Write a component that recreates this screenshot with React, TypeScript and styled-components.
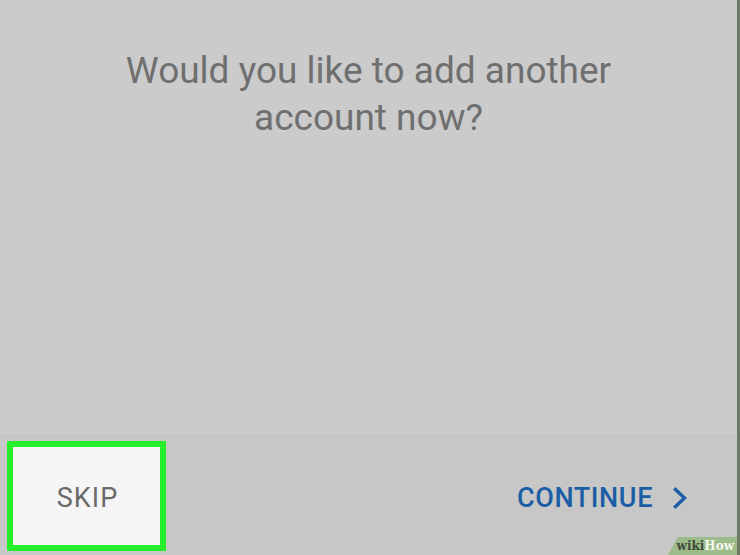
import React from "react";
import styled, { createGlobalStyle } from "styled-components";

const Global = createGlobalStyle`
  html, body { margin: 0; padding: 0; background: #cbcbcb; }
  body { font-family: Roboto, "Noto Sans", "Liberation Sans", sans-serif; }
`;

const Screen = styled.div`
  position: relative;
  width: 740px;
  height: 555px;
  display: flex;
  flex-direction: column;
  background: #cbcbcb;
  overflow: hidden;
  box-sizing: border-box;
  border-right: 3px solid #6c7a64;
`;

const Prompt = styled.section`
  height: 436px;
  box-sizing: border-box;
  padding-top: 47px;
  display: flex;
  justify-content: center;
  border-bottom: 1px solid #c3c3c3;
`;

const Question = styled.h1`
  margin: 0;
  width: 540px;
  text-align: center;
  font-family: Roboto, "Noto Sans", sans-serif;
  font-weight: 400;
  font-size: 37px;
  line-height: 47px;
  color: #6f6f70;
`;

const ActionBar = styled.footer`
  flex: 1;
  display: flex;
  align-items: center;
  justify-content: space-between;
  background: #c7c7c7;
  padding: 4px 49px 3px 7px;
`;

const SkipButton = styled.button`
  width: 159px;
  height: 110px;
  box-sizing: border-box;
  border: 6px solid #27ee2a;
  background: #f5f5f5;
  display: flex;
  align-items: center;
  justify-content: center;
  padding: 3px 0 0 2px;
  font-family: Roboto, "Noto Sans", sans-serif;
  font-size: 27px;
  font-weight: 400;
  color: #6a6a6a;
  letter-spacing: 1px;
  cursor: pointer;
`;

const ContinueButton = styled.button`
  border: none;
  background: transparent;
  display: flex;
  align-items: center;
  gap: 19px;
  padding: 4px 0 0 0;
  font-family: Roboto, "Noto Sans", sans-serif;
  font-size: 27px;
  font-weight: 500;
  letter-spacing: 0.6px;
  color: #1b5ea6;
  cursor: pointer;
`;

const Badge = styled.div`
  position: absolute;
  right: 0;
  bottom: 0;
  width: 66px;
  height: 18px;
  background: #9dbb8b;
  clip-path: polygon(10px 0, 100% 0, 100% 100%, 0 100%);
  display: flex;
  align-items: center;
  justify-content: flex-end;
  padding-right: 3px;
  font-family: "DejaVu Serif", "Liberation Serif", serif;
  font-weight: 700;
  font-size: 12px;
  line-height: 1;
`;

const BadgeWord = styled.span<{ $light?: boolean }>`
  color: ${(p) => (p.$light ? "#f4f8ef" : "#3e4a38")};
`;

const Chevron = () => (
  <svg width="16" height="22" viewBox="0 0 16 22" aria-hidden="true">
    <path d="M3.5 2.5 L12.5 11 L3.5 19.5" fill="none" stroke="#1b5ea6" strokeWidth="3.4" strokeLinecap="square" />
  </svg>
);

export default function App() {
  return (
    <>
      <Global />
      <Screen>
        <Prompt>
          <Question>Would you like to add another account now?</Question>
        </Prompt>
        <ActionBar>
          <SkipButton>SKIP</SkipButton>
          <ContinueButton>
            CONTINUE
            <Chevron />
          </ContinueButton>
        </ActionBar>
        <Badge>
          <BadgeWord>wiki</BadgeWord>
          <BadgeWord $light>How</BadgeWord>
        </Badge>
      </Screen>
    </>
  );
}
